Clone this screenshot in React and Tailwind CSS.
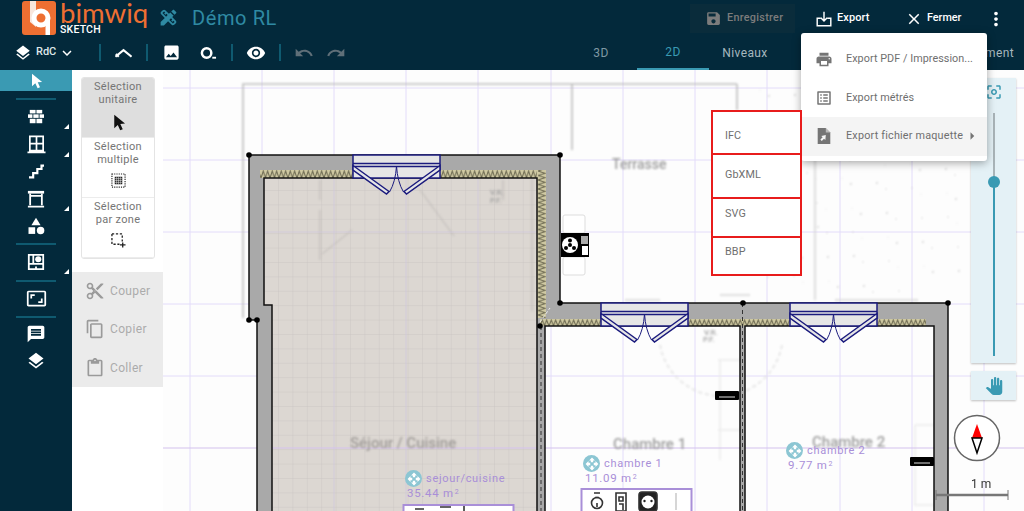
import React from "react";
import {
  MdLayers, MdExpandMore, MdImage, MdVisibility, MdUndo, MdRedo, MdSave, MdClose, MdMoreVert, MdPrint,
  MdContentCut, MdContentCopy, MdContentPaste, MdMessage, MdCategory, MdCenterFocusWeak, MdPanTool, MdArrowRight,
  MdOpenWith, MdDesignServices, MdOutlineListAlt, MdAspectRatio,
} from "react-icons/md";

const font = { fontFamily: "Roboto, 'Liberation Sans', sans-serif" };

const Arrow = ({ className }) => (
  <svg viewBox="0 0 24 24" className={className} fill="currentColor"><path d="M6 1v19l5-4.6 3.4 7.6 3.6-1.6-3.4-7.4 6.6-.6z" /></svg>
);
const Sep = ({ className = "" }) => <div className={`w-[2px] h-[17px] bg-[#0f5a70] ${className}`} />;
const SideSep = ({ className = "" }) => <div className={`w-10 h-[2px] bg-[#0f5a70] mx-auto ${className}`} />;

const Brick = () => (
  <svg viewBox="0 0 20 18" className="w-[18px] h-[16px]" fill="#fff">
    <rect x="3" y="1" width="6.5" height="4" /><rect x="10.5" y="1" width="6.5" height="4" />
    <rect x="1" y="6" width="5" height="4" /><rect x="7" y="6" width="6" height="4" /><rect x="14" y="6" width="5" height="4" />
    <rect x="3" y="11" width="6.5" height="5" /><rect x="10.5" y="11" width="6.5" height="5" />
  </svg>
);
const WindowIco = () => (
  <svg viewBox="0 0 20 20" className="w-[19px] h-[19px]" fill="none" stroke="#fff" strokeWidth="1.8">
    <path d="M3 1.5h14v15H3zM10 1.5v15M3 9h14M0.5 18.2h19" />
  </svg>
);
const Stairs = () => (
  <svg viewBox="0 0 20 18" className="w-[17px] h-[15px]" fill="none" stroke="#fff" strokeWidth="2.6">
    <path d="M1 16h5v-5h5V6h5V2h3" />
  </svg>
);
const Fireplace = () => (
  <svg viewBox="0 0 20 20" className="w-[18px] h-[18px]" fill="none" stroke="#fff" strokeWidth="2">
    <path d="M1 2.5h18" strokeWidth="3" /><path d="M3.5 4v13M16.5 4v13M3.5 6.5h13M1 18.5h18" />
  </svg>
);
const RoomIco = () => (
  <svg viewBox="0 0 20 20" className="w-[18px] h-[18px]" fill="none" stroke="#fff" strokeWidth="2">
    <path d="M2 2h16v16H2zM7 2v10M2 12h16M10 15v3" /><circle cx="12.5" cy="7" r="3.4" fill="#fff" stroke="none" />
  </svg>
);
const ExportIco = () => (
  <svg viewBox="0 0 20 20" className="w-[16px] h-[16px]" fill="none" stroke="#fff" strokeWidth="1.8">
    <path d="M6 9H1.5v9.5h17V9H14" /><path d="M10 1v11.5M6 8.5l4 4 4-4" />
  </svg>
);
const FileIco = () => (
  <svg viewBox="0 0 20 20" className="w-[18px] h-[18px]" fill="#757575">
    <path d="M3 1h9l5 5v13H3z" /><path d="M12 1v5h5" fill="#fff" opacity=".5" />
    <path d="M12 9l-5 1 1.5 1.5L6 14l1.5 1.5 2.5-2.5 1.5 1.5z" fill="#f5f5f5" />
  </svg>
);
const RoofIco = () => (
  <svg viewBox="0 0 18 10" className="w-[17px] h-[10px]" fill="none" stroke="#fff" strokeWidth="2.2">
    <path d="M0.5 9L9 2l8.5 7M1 6l3 3" />
  </svg>
);
const TapeIco = () => (
  <svg viewBox="0 0 18 14" className="w-[17px] h-[14px]" fill="none" stroke="#fff" strokeWidth="2.6">
    <circle cx="7" cy="7" r="5" /><path d="M13 12h4" strokeWidth="2" />
  </svg>
);
const SelMulti = () => (
  <svg viewBox="0 0 16 16" className="w-[15px] h-[15px]" fill="#222">
    <path d="M1 1h14v14H1z" fill="none" stroke="#222" strokeWidth="1.2" strokeDasharray="1.2 1.2" />
    <rect x="4" y="4" width="8" height="8" />
    <path d="M6 4v8M8 4v8M10 4v8M4 6h8M4 8h8M4 10h8" stroke="#fff" strokeWidth=".5" />
  </svg>
);
const SelZone = () => (
  <svg viewBox="0 0 16 16" className="w-[15px] h-[15px]" fill="none" stroke="#222" strokeWidth="1.4">
    <path d="M1 1h11v8M1 1v11h8" strokeDasharray="2.4 1.8" /><path d="M12.5 10v5.5M9.5 12.7h6" />
  </svg>
);

const Corner = () => <span className="absolute right-[3px] bottom-[1px] w-0 h-0 border-l-[5px] border-l-transparent border-b-[5px] border-b-white" />;

const SideItem = ({ h, corner, children }) => (
  <div className={`relative flex items-center justify-center ${h}`}>{children}{corner && <Corner />}</div>
);

const PlanSvg = () => {
  const vg = [190, 262, 334, 406, 478, 551, 623, 695, 767, 840, 912, 984];
  const hg = [88, 160, 232, 304, 376];
  const specks = [];
  for (let i = 0; i < 90; i++) {
    specks.push([760 + ((i * 47) % 200), 90 + ((i * 83) % 205), 0.5 + (i % 3) * 0.3]);
  }
  const win = (x) => (
    <g fill="#e6e6e6" stroke="#1b1b7e" strokeWidth="1.5">
      <rect x={x} y="155" width="87" height="23" />
      <path d={`M${x} 163.5h87M${x} 166.5h87`} fill="none" />
      <path d={`M${x} 165.5L${x + 36} 191.5 ${x + 33.5} 194 ${x} 170z`} />
      <path d={`M${x + 87} 165.5L${x + 51} 191.5 ${x + 53.5} 194 ${x + 87} 170z`} />
      <path d={`M${x + 43.5} 166q-1 16 -7 26M${x + 43.5} 166q1 16 7 26`} fill="none" strokeWidth="1" />
    </g>
  );
  const win2 = (x) => <g transform="translate(0 148)">{win(x)}</g>;
  return (
    <svg viewBox="163 70 861 441" className="absolute inset-0 w-full h-full blur-[0.35px]" style={font}>
      <defs>
        <pattern id="tile" x="278" y="190" width="14.4" height="14.4" patternUnits="userSpaceOnUse">
          <rect width="14.4" height="14.4" fill="#dcd7d2" />
          <path d="M0 0H14.4M0 0V14.4" stroke="#c6c2c0" strokeWidth="0.8" />
        </pattern>
        <pattern id="ins" x="0" y="170" width="4.5" height="8" patternUnits="userSpaceOnUse">
          <rect width="4.5" height="8" fill="#cfc9a2" />
          <path d="M0 8L2.2 1 4.5 8" fill="none" stroke="#6b6850" strokeWidth="1" />
        </pattern>
        <pattern id="ins2" x="0" y="319" width="4.5" height="7" patternUnits="userSpaceOnUse">
          <rect width="4.5" height="7" fill="#cfc9a2" />
          <path d="M0 7L2.2 1 4.5 7" fill="none" stroke="#6b6850" strokeWidth="1" />
        </pattern>
        <pattern id="insv" x="537" y="0" width="9" height="4.5" patternUnits="userSpaceOnUse">
          <rect width="9" height="4.5" fill="#cfc9a2" />
          <path d="M1 0L8 2.2 1 4.5" fill="none" stroke="#6b6850" strokeWidth="1" />
        </pattern>
      </defs>
      <rect x="163" y="70" width="861" height="441" fill="#fdfdfd" />
      {/* grid */}
      <g stroke="#e3dcfa" strokeWidth="1">
        {vg.map((x) => <path key={x} d={`M${x} 70V511`} />)}
        {hg.map((y) => <path key={y} d={`M163 ${y}H1024`} />)}
      </g>
      {/* faint sketch */}
      <g className="blur-[1px]" fill="none" stroke="#bdbdbd" strokeWidth="1.6">
        <path d="M243 318V84H570M570 84H737M572 84V150M737 84V110" />
        <path d="M815 85V300M918 300H835M625 300h35M750 295h-30" stroke="#d6d6d6" />
        <path d="M660 345a62 62 0 0 0 122 0" strokeDasharray="4 3" stroke="#e2e2e2" />
        <path d="M720 360V460M718 360h22M718 430h22M915 425v80h20M915 425h20" stroke="#ececec" />
        {specks.map(([x, y, r], i) => <circle key={i} cx={x} cy={y} r={r} fill="#d8d8d8" stroke="none" />)}
      </g>
      {/* room fill */}
      <rect x="264" y="178" width="273" height="127" fill="url(#tile)" />
      <rect x="272" y="305" width="265" height="206" fill="url(#tile)" />
      <g className="blur-[1px]" fill="none" stroke="#bbb7b4" strokeWidth="1">
        <path d="M320 180v20M352 230l-30 24M420 190l34 46M320 210v50M532 178v133M503 180v20" />
      </g>
      <path d="M264 232H537M406 178V511M334 178V511M478 178V511" stroke="#cfc8dc" strokeWidth="0.8" />
      <path d="M163 448H1024" stroke="#d4c2ee" strokeWidth="1.2" />
      {/* faint texts */}
      <g className="blur-[1px]" fill="#9f9f9f" fontSize="15" fontWeight="500">
        <text x="350" y="448" fill="#a09c99">Séjour / Cuisine</text>
        <text x="613" y="449">Chambre 1</text>
        <text x="812" y="447">Chambre 2</text>
        <text x="612" y="169" fontSize="14">Terrasse</text>
        <text x="490" y="195" fontSize="8">V.R.</text>
        <text x="490" y="203" fontSize="8">P.F.</text>
        <text x="703" y="342" fontSize="8">P.F.</text>
        <text x="704" y="335" fontSize="8">V.R.</text>
      </g>
      {/* walls */}
      <path d="M249 155H560V303H948V511H934V326H745V511H740V326H545V511H537V178H264V305H272V511H257V320H249Z" fill="#a9a9a9" />
      <rect x="260" y="170" width="277" height="8" fill="url(#ins)" />
      <rect x="537" y="170" width="9" height="148" fill="url(#insv)" />
      <rect x="540" y="319" width="386" height="7" fill="url(#ins2)" />
      <path d="M249 155H560V303H948V511M934 511V326H745V511M740 511V326H545V511M537 511V178H264V305H272V511M257 511V320H249V155" fill="none" stroke="#111" strokeWidth="1.5" />
      <path d="M541 326V511M742.5 303V511" stroke="#333" strokeWidth="1" strokeDasharray="4 3" />
      <path d="M540 322l10-14" stroke="#eee" strokeWidth="1" strokeDasharray="3 2" />
      {win(353)}
      {win2(601)}
      {win2(790)}
      {[[249, 155], [560, 155], [560, 303], [743, 303], [948, 303], [249, 320], [257, 320], [540, 326]].map(([x, y]) => (
        <circle key={`${x}-${y}`} cx={x} cy={y} r="2.8" fill="#000" />
      ))}
      {/* boiler */}
      <g>
        <rect x="563" y="215" width="22" height="18" rx="2" fill="#fff" stroke="#ddd" />
        <rect x="563" y="257" width="22" height="18" rx="2" fill="#fff" stroke="#ddd" />
        <rect x="561" y="233" width="28" height="24" fill="#000" />
        <circle cx="570" cy="245" r="8" fill="#fff" />
        <circle cx="570" cy="245" r="2" fill="#000" />
        <circle cx="570" cy="240.5" r="2" fill="#000" />
        <circle cx="566" cy="248" r="2" fill="#000" />
        <circle cx="574" cy="248" r="2" fill="#000" />
        <rect x="581" y="236" width="7" height="8" fill="#aaa" />
        <rect x="582" y="246" width="6" height="9" fill="#fff" />
      </g>
      {/* radiators */}
      <g fill="#000">
        <rect x="715" y="391" width="24" height="9" rx="1" />
        <rect x="910" y="457" width="24" height="9" rx="1" />
      </g>
      <path d="M719 397h16M914 463h16" stroke="#ddd" strokeWidth="1" />
      {/* service boxes */}
      <rect x="581.5" y="489" width="110" height="30" fill="#fff" stroke="#a98fd8" strokeWidth="2" />
      <rect x="403.5" y="505" width="110" height="20" fill="#fff" stroke="#a98fd8" strokeWidth="2" />
      <g fill="none" stroke="#333" strokeWidth="1.6">
        <circle cx="597" cy="503" r="5.5" />
        <path d="M594 493h6M595 497.5h4M597 503v4" />
        <path d="M616 493h10v18h-10zM619 497h4v4h-4zM619 504h4v6" />
        <rect x="639" y="492" width="18" height="19" rx="3" fill="#222" />
        <circle cx="648" cy="502" r="6.5" fill="#fff" stroke="none" />
        <path d="M676 493v17" stroke="#ccc" />
        <path d="M415 509h9M440 507h11M464 511v-5" />
      </g>
      <circle cx="644.5" cy="501" r="1.2" fill="#222" /><circle cx="651.5" cy="501" r="1.2" fill="#222" />
      {/* compass */}
      <circle cx="977" cy="438" r="22.5" fill="#fff" stroke="#666" strokeWidth="1.5" />
      <path d="M977 424l-5 14h10z" fill="#f00" />
      <path d="M972 438l5 15 5-15z" fill="#fff" stroke="#000" strokeWidth="1.5" />
      {/* scale */}
      <path d="M936 495H1008" stroke="#777" strokeWidth="2.5" />
      <path d="M936 490v10M1008 490v10" stroke="#777" strokeWidth="1" />
      <text x="971" y="488" fontSize="12" fill="#333">1 m</text>
    </svg>
  );
};

const RoomLabel = ({ x, y, tx, name, area, ax }) => (
  <>
    <div className="absolute flex items-center justify-center w-[17px] h-[17px] rounded-full bg-[#8cc6d3]" style={{ left: x, top: y }}>
      <MdOpenWith className="text-white w-[14px] h-[14px]" />
    </div>
    <div className="absolute text-[11px] leading-[14px] tracking-[0.7px] text-[#a98fd8] whitespace-nowrap" style={{ left: tx, top: y + 2 }}>{name}</div>
    <div className="absolute text-[11.5px] leading-[14px] tracking-[0.7px] text-[#a98fd8] whitespace-nowrap" style={{ left: ax, top: y + 16 }}>{area}<sup className="text-[7px] ml-[1px]">2</sup></div>
  </>
);

const CardItem = ({ label1, label2, active, children }) => (
  <div className={`h-[60px] flex flex-col items-center pt-[2px] text-[11px] leading-[13px] tracking-[0.3px] text-[#757575] border-b border-[#ececec] ${active ? "bg-[#dedede]" : ""}`}>
    <span>{label1}</span><span>{label2}</span>
    <div className="mt-[7px]">{children}</div>
  </div>
);

const MenuRow = ({ icon, label, active, arrow }) => (
  <div className={`h-[38.5px] flex items-center pl-[14px] ${active ? "bg-[#f4f4f4]" : ""}`}>
    <div className="w-[18px] flex justify-center text-[#757575]">{icon}</div>
    <span className={`ml-[13px] text-[10.8px] text-[#6f6f6f] whitespace-nowrap ${arrow ? "tracking-[0.2px]" : "tracking-[0.05px]"}`}>{label}</span>
    {arrow && <MdArrowRight className="w-[18px] h-[18px] text-[#757575]" />}
  </div>
);

const SubRow = ({ label, h }) => (
  <div className={`${h} flex items-center pl-[12px] text-[10.8px] tracking-[0.1px] text-[#6f6f6f] border-b-2 last:border-b-0 border-[#e81c1c]`}>{label}</div>
);

export default function App() {
  return (
    <div className="relative w-[1024px] h-[511px] overflow-hidden flex flex-col bg-white" style={font}>
      <header className="h-[70px] bg-[#03293b] flex flex-col shrink-0">
        <div className="h-[35px] flex items-center">
          <div className="ml-[22px] flex items-center">
            <svg viewBox="0 0 34 34" className="w-[34px] h-[34px]">
              <rect width="34" height="34" rx="3" fill="#ee6f32" />
              <path d="M8 0h6v26l-6-5z" fill="#f8e6dc" />
              <circle cx="19" cy="17" r="7" fill="none" stroke="#fff" strokeWidth="5" />
              <path d="M23.5 18h4.5v16h-4.5z" fill="#fff" />
            </svg>
            <div className="ml-[4px] w-[92px] h-[35px] flex flex-col">
              <span className="h-[25px] text-[27.5px] leading-[25px] text-[#ee6f32]" style={{ fontFamily: "Lato, sans-serif" }}>bimwiq</span>
              <span className="text-[10.5px] leading-[10px] tracking-[0.2px] text-white font-medium">SKETCH</span>
            </div>
          </div>
          <MdDesignServices className="ml-[6px] w-[21px] h-[21px] text-[#2f8aa3]" />
          <span className="ml-[13px] text-[20px] tracking-[0.6px] text-[#2f8aa3] leading-none">Démo RL</span>
          <div className="ml-auto flex items-center pt-[2px]">
            <div className="h-[29px] w-[105px] bg-[#0a2c3b] flex items-center pl-[15px] text-[#7c7c7c]">
              <MdSave className="w-[17px] h-[17px]" />
              <span className="ml-[5px] text-[10.8px] tracking-[0.3px] font-medium">Enregistrer</span>
            </div>
            <div className="ml-[21px] flex items-center text-white w-[89px]">
              <ExportIco />
              <span className="ml-[5px] text-[11px] tracking-[0.1px] font-medium">Export</span>
            </div>
            <div className="flex items-center text-white w-[80px]">
              <MdClose className="w-[18px] h-[18px]" />
              <span className="ml-[4px] text-[10.8px] font-medium">Fermer</span>
            </div>
            <MdMoreVert className="mr-[17px] w-[22px] h-[22px] text-white" />
          </div>
        </div>
        <div className="h-[35px] flex items-center">
          <div className="ml-[14px] flex items-center text-white">
            <MdLayers className="w-[18px] h-[18px]" />
            <span className="ml-[4px] text-[11px] font-medium text-[#dfe6e9]">RdC</span>
            <MdExpandMore className="ml-[2px] w-[18px] h-[18px]" />
          </div>
          <Sep className="ml-[23px]" />
          <div className="ml-[14px]"><RoofIco /></div>
          <Sep className="ml-[14px]" />
          <MdImage className="ml-[14px] w-[19px] h-[19px] text-white" />
          <div className="ml-[19px]"><TapeIco /></div>
          <Sep className="ml-[14px]" />
          <MdVisibility className="ml-[13px] w-[20px] h-[20px] text-white" />
          <Sep className="ml-[13px]" />
          <MdUndo className="ml-[13px] w-[20px] h-[20px] text-[#5f6f78]" />
          <MdRedo className="ml-[12px] w-[20px] h-[20px] text-[#5f6f78]" />
          <div className="ml-auto self-stretch flex items-stretch text-[12px] tracking-[0.4px] mr-[10px]">
            <div className="w-[72px] flex items-center justify-center text-[#7f98a3]">3D</div>
            <div className="w-[72px] flex items-center justify-center text-[#3a9ab3] border-b-2 border-[#3a9ab3]">2D</div>
            <div className="w-[72px] flex items-center justify-center text-[#a7b8bf]">Niveaux</div>
            <div className="w-[72px] flex items-center justify-center text-[#a7b8bf]">Murs</div>
            <div className="w-[72px] flex items-center justify-center text-[#a7b8bf]">Pièces</div>
            <div className="w-[89px] flex items-center justify-end text-[#a7b8bf] whitespace-nowrap">Aménagement</div>
          </div>
        </div>
      </header>

      <div className="flex-1 flex min-h-0">
        <aside className="w-[72px] bg-[#03293b] shrink-0 flex flex-col">
          <div className="h-[21px] bg-[#3a9ab3] flex items-center justify-center text-white"><Arrow className="w-[16px] h-[18px]" /></div>
          <SideSep className="mt-[7px]" />
          <SideItem h="h-[27px] mt-[3px]" corner><Brick /></SideItem>
          <SideItem h="h-[28px]" corner><WindowIco /></SideItem>
          <SideItem h="h-[27px]"><Stairs /></SideItem>
          <SideItem h="h-[27px]" corner><Fireplace /></SideItem>
          <SideItem h="h-[27px]"><MdCategory className="w-[20px] h-[20px] text-white" /></SideItem>
          <SideSep className="mt-[4px]" />
          <SideItem h="h-[27px] mt-[3px]" corner><RoomIco /></SideItem>
          <SideSep className="mt-[5px]" />
          <SideItem h="h-[28px] mt-[2px]"><MdAspectRatio className="w-[21px] h-[21px] text-white" /></SideItem>
          <SideSep className="mt-[4px]" />
          <SideItem h="h-[27px] mt-[2px]"><MdMessage className="w-[20px] h-[20px] text-white" /></SideItem>
          <SideItem h="h-[28px]"><MdLayers className="w-[20px] h-[20px] text-white" /></SideItem>
        </aside>

        <div className="w-[91px] bg-white shrink-0 flex flex-col">
          <div className="mt-[7px] ml-[9px] w-[74px] border border-[#e4e4e4] rounded-[3px] overflow-hidden">
            <CardItem label1="Sélection" label2="unitaire" active><Arrow className="w-[17px] h-[19px] text-[#111]" /></CardItem>
            <CardItem label1="Sélection" label2="multiple"><SelMulti /></CardItem>
            <CardItem label1="Sélection" label2="par zone"><SelZone /></CardItem>
          </div>
          <div className="mt-[13px] h-[115px] bg-[#ebebeb] flex flex-col justify-center text-[#ababab] text-[12px] tracking-[0.35px]">
            <div className="h-[38.5px] flex items-center pl-[13px]"><MdContentCut className="w-[20px] h-[20px] text-[#9a9a9a]" /><span className="ml-[5px]">Couper</span></div>
            <div className="h-[38.5px] flex items-center pl-[13px]"><MdContentCopy className="w-[20px] h-[20px] text-[#9a9a9a]" /><span className="ml-[5px]">Copier</span></div>
            <div className="h-[38.5px] flex items-center pl-[13px]"><MdContentPaste className="w-[20px] h-[20px] text-[#9a9a9a]" /><span className="ml-[5px]">Coller</span></div>
          </div>
        </div>

        <main className="relative flex-1 overflow-hidden">
          <PlanSvg />
          <RoomLabel x={242} y={400} tx={263} name="sejour/cuisine" ax={244} area="35.44 m" />
          <RoomLabel x={420} y={385} tx={441} name="chambre 1" ax={422} area="11.09 m" />
          <RoomLabel x={623} y={372} tx={644} name="chambre 2" ax={625} area="9.77 m" />
          <div className="absolute left-[808px] top-[8px] w-[45px] h-[285px] bg-[#e4f1f6] shadow-[0_1px_2px_rgba(0,0,0,0.25)] flex flex-col items-center">
            <MdCenterFocusWeak className="mt-[5px] w-[18px] h-[18px] text-[#3a9ab3]" />
            <div className="mt-[12px] relative w-[2px] h-[243px] bg-[#3a9ab3]">
              <div className="absolute left-0 top-0 w-[2px] h-[69px] bg-[#a9b4b8]" />
              <div className="absolute left-[-5px] top-[63px] w-[12px] h-[12px] rounded-full bg-[#3a9ab3]" />
            </div>
          </div>
          <div className="absolute left-[808px] top-[301px] w-[45px] h-[29px] bg-[#e4f1f6] shadow-[0_1px_2px_rgba(0,0,0,0.25)] flex items-center justify-center">
            <MdPanTool className="w-[18px] h-[18px] text-[#3a9ab3]" />
          </div>
        </main>
      </div>

      <div className="absolute left-[801px] top-[33px] w-[186px] h-[128px] bg-white rounded-[3px] shadow-[0_2px_8px_rgba(0,0,0,0.35)] py-[7px]">
        <MenuRow icon={<MdPrint className="w-[19px] h-[19px]" />} label="Export PDF / Impression..." />
        <MenuRow icon={<MdOutlineListAlt className="w-[18px] h-[18px]" />} label="Export métrés" />
        <MenuRow icon={<FileIco />} label="Export fichier maquette" active arrow />
      </div>
      <div className="absolute left-[711px] top-[110px] w-[91px] h-[166px] bg-white border-2 border-[#e81c1c] flex flex-col">
        <SubRow label="IFC" h="h-[43px] pt-[8px]" />
        <SubRow label="GbXML" h="h-[44px] pb-[2px]" />
        <SubRow label="SVG" h="h-[39px] pb-[7px]" />
        <SubRow label="BBP" h="flex-1 pb-[7px]" />
      </div>
    </div>
  );
}
